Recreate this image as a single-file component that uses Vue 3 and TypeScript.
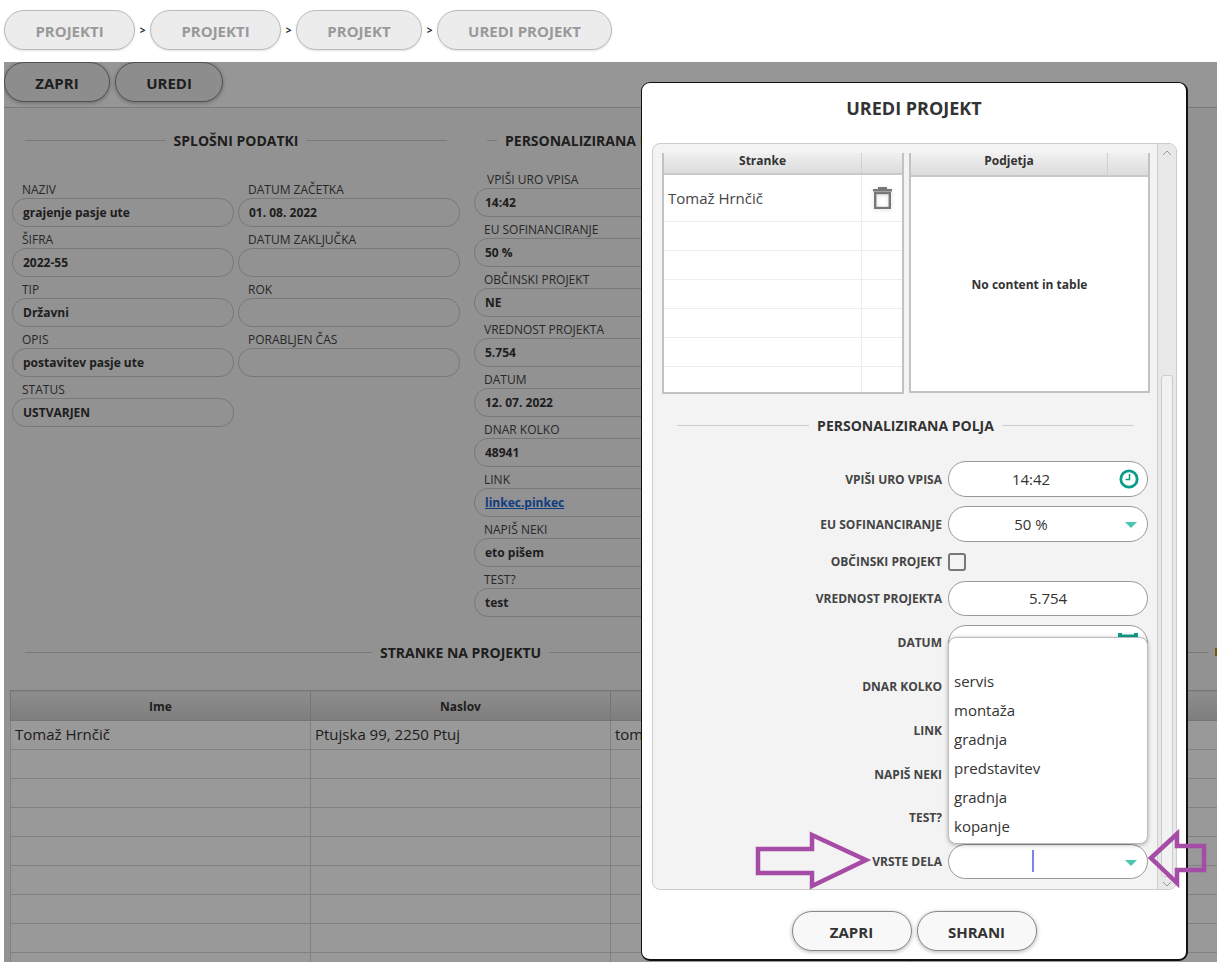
<script setup lang="ts">
interface Field {
  label: string;
  value: string;
  link?: boolean;
}

interface FormRow {
  label: string;
  value?: string;
  kind: "time" | "select" | "check" | "text" | "date" | "blank" | "caret";
  size?: string;
}

const crumbs = ["PROJEKTI", "PROJEKTI", "PROJEKT", "UREDI PROJEKT"];

const firstColumn: Field[] = [
  { label: "NAZIV", value: "grajenje pasje ute" },
  { label: "ŠIFRA", value: "2022-55" },
  { label: "TIP", value: "Državni" },
  { label: "OPIS", value: "postavitev pasje ute" },
  { label: "STATUS", value: "USTVARJEN" },
];

const secondColumn: Field[] = [
  { label: "DATUM ZAČETKA", value: "01. 08. 2022" },
  { label: "DATUM ZAKLJUČKA", value: "" },
  { label: "ROK", value: "" },
  { label: "PORABLJEN ČAS", value: "" },
];

const customColumn: Field[] = [
  { label: "VPIŠI URO VPISA", value: "14:42" },
  { label: "EU SOFINANCIRANJE", value: "50 %" },
  { label: "OBČINSKI PROJEKT", value: "NE" },
  { label: "VREDNOST PROJEKTA", value: "5.754" },
  { label: "DATUM", value: "12. 07. 2022" },
  { label: "DNAR KOLKO", value: "48941" },
  { label: "LINK", value: "linkec.pinkec", link: true },
  { label: "NAPIŠ NEKI", value: "eto pišem" },
  { label: "TEST?", value: "test" },
];

const formRows: FormRow[] = [
  { label: "VPIŠI URO VPISA", value: "14:42", kind: "time" },
  { label: "EU SOFINANCIRANJE", value: "50 %", kind: "select" },
  { label: "OBČINSKI PROJEKT", kind: "check", size: "check" },
  { label: "VREDNOST PROJEKTA", value: "5.754", kind: "text", size: "short" },
  { label: "DATUM", kind: "date" },
  { label: "DNAR KOLKO", kind: "blank", size: "short" },
  { label: "LINK", kind: "blank", size: "short" },
  { label: "NAPIŠ NEKI", kind: "blank", size: "short" },
  { label: "TEST?", kind: "blank", size: "short" },
  { label: "VRSTE DELA", kind: "caret", size: "short" },
];

const workTypes = ["", "servis", "montaža", "gradnja", "predstavitev", "gradnja", "kopanje"];
</script>

<template>
  <div class="app">
    <nav class="crumbs">
      <template v-for="(crumb, i) in crumbs" :key="i">
        <span v-if="i > 0" class="crumb-sep">&gt;</span>
        <span class="crumb" :class="`crumb-${i}`">{{ crumb }}</span>
      </template>
    </nav>

    <main class="page">
      <div class="toolbar">
        <button class="pill tool-zapri">ZAPRI</button>
        <button class="pill tool-uredi">UREDI</button>
      </div>

      <div class="sections">
        <section class="general">
          <h3 class="heading"><span>SPLOŠNI PODATKI</span></h3>
          <div class="general-grid">
            <div>
              <div v-for="f in firstColumn" :key="f.label" class="field">
                <label>{{ f.label }}</label>
                <div class="value">{{ f.value }}</div>
              </div>
            </div>
            <div>
              <div v-for="f in secondColumn" :key="f.label" class="field">
                <label>{{ f.label }}</label>
                <div class="value">{{ f.value }}</div>
              </div>
            </div>
          </div>
        </section>

        <section class="custom">
          <h3 class="heading heading-custom"><span>PERSONALIZIRANA POLJA</span></h3>
          <div v-for="(f, i) in customColumn" :key="f.label" class="field">
            <label :class="{ nudged: i === 0 }">{{ f.label }}</label>
            <div class="value">
              <a v-if="f.link" class="link">{{ f.value }}</a>
              <template v-else>{{ f.value }}</template>
            </div>
          </div>
        </section>
      </div>

      <div class="clients">
        <h3 class="heading heading-clients">
          <span>STRANKE NA PROJEKTU</span>
          <b class="next-title"></b>
        </h3>
        <table class="bg-table">
          <thead>
            <tr>
              <th>Ime</th>
              <th>Naslov</th>
              <th>Email</th>
              <th class="rest"></th>
            </tr>
          </thead>
          <tbody>
            <tr>
              <td>Tomaž Hrnčič</td>
              <td>Ptujska 99, 2250 Ptuj</td>
              <td>tomaz@example.si</td>
              <td></td>
            </tr>
            <tr v-for="n in 8" :key="n">
              <td></td>
              <td></td>
              <td></td>
              <td></td>
            </tr>
          </tbody>
        </table>
      </div>

      <div class="backdrop">
        <div class="modal">
          <h2 class="modal-title">UREDI PROJEKT</h2>

          <div class="scroll-box">
            <div class="scroll-content">
              <div class="tables">
                <table class="mini-table">
                  <thead>
                    <tr>
                      <th>Stranke</th>
                      <th class="action-col"></th>
                    </tr>
                  </thead>
                  <tbody>
                    <tr class="first-row">
                      <td>Tomaž Hrnčič</td>
                      <td class="action-col">
                        <svg class="trash" viewBox="0 0 19 22" width="19" height="22">
                          <path d="M5 0h9v2h5v2.5H0V2h5z" fill="#777" />
                          <rect x="2.2" y="6" width="14.6" height="15" fill="none" stroke="#777" stroke-width="2.4" />
                        </svg>
                      </td>
                    </tr>
                    <tr v-for="n in 6" :key="n">
                      <td></td>
                      <td class="action-col"></td>
                    </tr>
                  </tbody>
                </table>

                <div class="mini-table-empty">
                  <div class="mini-head">
                    <span>Podjetja</span>
                    <span class="mini-head-action"></span>
                  </div>
                  <div class="no-content">No content in table</div>
                </div>
              </div>

              <h3 class="heading heading-form"><span>PERSONALIZIRANA POLJA</span></h3>

              <div class="form">
                <div
                  v-for="row in formRows"
                  :key="row.label"
                  class="form-row"
                  :class="row.size"
                >
                  <label>{{ row.label }}</label>

                  <span v-if="row.kind === 'check'" class="checkbox"></span>
                  <div v-else class="input" :class="row.kind">
                    <span v-if="row.value">{{ row.value }}</span>
                    <span v-if="row.kind === 'caret'" class="text-caret"></span>

                    <svg v-if="row.kind === 'time'" class="input-icon" viewBox="0 0 20 20" width="20" height="20">
                      <circle cx="10" cy="10" r="8.2" fill="none" stroke="#0c9c8a" stroke-width="2.8" />
                      <path d="M10.5 5v5.5H6.5" fill="none" stroke="#0c9c8a" stroke-width="1.5" />
                    </svg>
                    <svg v-if="row.kind === 'date'" class="input-icon date-icon" viewBox="0 0 20 20" width="20" height="20">
                      <path d="M0 0h4v1.5h12V0h4v20H0z" fill="#0c9c8a" />
                    </svg>
                    <i v-if="row.kind === 'select' || row.kind === 'caret'" class="arrow"></i>
                  </div>
                </div>

                <ul class="dropdown">
                  <li v-for="(item, i) in workTypes" :key="i">{{ item }}</li>
                </ul>
              </div>
            </div>

            <div class="scrollbar">
              <svg viewBox="0 0 10 6" width="10" height="6" class="chevron">
                <path d="M1 5l4-4 4 4" fill="none" stroke="#999" stroke-width="1" />
              </svg>
              <div class="thumb"></div>
              <svg viewBox="0 0 10 6" width="10" height="6" class="chevron">
                <path d="M1 1l4 4 4-4" fill="none" stroke="#999" stroke-width="1" />
              </svg>
            </div>
          </div>

          <div class="modal-footer">
            <button class="pill footer-btn">ZAPRI</button>
            <button class="pill footer-btn">SHRANI</button>
          </div>
        </div>
      </div>
    </main>

    <!-- annotation arrows drawn on top of the screenshot -->
    <svg class="annotations" width="1217" height="962" viewBox="0 0 1217 962">
      <path d="M758 849H812V835L866 860L812 886V873H758Z" />
      <path d="M1151 858L1177 834V846H1204V870H1177V883Z" />
    </svg>
  </div>
</template>

<style scoped>
.app {
  position: relative;
  width: 1217px;
  height: 962px;
  overflow: hidden;
  background: #fff;
  font-family: "Open Sans", "Liberation Sans", sans-serif;
  color: #333;
}

.crumbs {
  display: flex;
  align-items: center;
  height: 62px;
  padding: 0 0 2px 4px;
  box-sizing: border-box;
}

.crumb {
  display: flex;
  align-items: center;
  justify-content: center;
  height: 40px;
  padding-top: 2px;
  box-sizing: border-box;
  border: 1px solid #bbb;
  border-radius: 20px;
  background: #ececec;
  color: #999;
  font-size: 15px;
  font-weight: 700;
  box-shadow: 0 1px 2px rgba(0, 0, 0, 0.12);
}

.crumb-0,
.crumb-1 {
  width: 131px;
}

.crumb-2 {
  width: 126px;
}

.crumb-3 {
  width: 175px;
}

.crumb-sep {
  width: 15px;
  text-align: center;
  font-size: 10px;
  font-weight: 700;
  color: #222;
}

.page {
  position: relative;
  height: 900px;
  margin-left: 4px;
  background: #f3f3f3;
  overflow: hidden;
}

.toolbar {
  display: flex;
  gap: 5px;
  height: 46px;
  box-sizing: border-box;
  background: #fbfbfb;
  border-bottom: 1px solid #ccc;
}

.pill {
  height: 40px;
  padding: 2px 0 0;
  box-sizing: border-box;
  border: 1px solid #888;
  border-radius: 20px;
  background: #ececec;
  color: #333;
  font-family: inherit;
  font-size: 15px;
  font-weight: 700;
  box-shadow: 0 1px 4px rgba(0, 0, 0, 0.3);
}

.tool-zapri {
  width: 106px;
}

.tool-uredi {
  width: 108px;
}

.sections {
  display: flex;
  gap: 14px;
  padding: 22px 0 0 8px;
}

.general {
  width: 448px;
}

.custom {
  width: 221px;
}

.heading {
  display: flex;
  align-items: center;
  gap: 8px;
  height: 20px;
  margin: 0;
  font-size: 14px;
  font-weight: 700;
  color: #333;
  white-space: nowrap;
}

.heading::before,
.heading::after {
  content: "";
  flex: 1;
  height: 1px;
  background: #ccc;
}

.general .heading {
  margin: 0 13px;
}

.general-grid {
  display: grid;
  grid-template-columns: 222px 222px;
  gap: 4px;
  margin-top: 27px;
}

.heading-custom {
  margin: 0 0 17px 13px;
}

.heading-custom::before {
  flex: 0 0 10px;
}

.field {
  height: 50px;
}

.field label {
  display: block;
  height: 21px;
  padding-left: 10px;
  font-size: 12px;
  line-height: 26px;
  color: #444;
}

.field label.nudged {
  padding-left: 13px;
}

.value {
  height: 29px;
  box-sizing: border-box;
  padding-left: 10px;
  border: 1px solid #c8c8c8;
  border-radius: 14px;
  font-size: 12px;
  font-weight: 700;
  line-height: 28px;
}

.link {
  color: #1a66d6;
  text-decoration: underline;
}

.clients {
  padding: 0 0 0 6px;
  margin-top: 25px;
}

.heading-clients {
  margin: 0 0 28px 15px;
  width: 1184px;
}

.heading-clients::before {
  flex: 0 0 347px;
}

.next-title {
  position: absolute;
  right: -2px;
  width: 4px;
  height: 8px;
  background: #cf8a1a;
}

.bg-table {
  width: 1300px;
  table-layout: fixed;
  border-collapse: collapse;
  background: #fff;
}

.bg-table th {
  width: 300px;
  height: 30px;
  padding: 2px 0 0;
  box-sizing: border-box;
  border: 1px solid #c4c4c4;
  background: linear-gradient(#ececec, #d2d2d2);
  font-size: 12px;
  font-weight: 700;
  color: #333;
}

.bg-table th.rest {
  width: 400px;
}

.bg-table td {
  height: 29px;
  padding: 0 4px 2px;
  box-sizing: border-box;
  border: 1px solid #d8d8d8;
  font-size: 15px;
  white-space: nowrap;
  overflow: hidden;
}

.backdrop {
  position: absolute;
  inset: 0;
  background: rgba(0, 0, 0, 0.4);
}

.modal {
  position: absolute;
  left: 637px;
  top: 20px;
  display: flex;
  flex-direction: column;
  width: 547px;
  height: 879px;
  box-sizing: border-box;
  border: 1px solid #111;
  border-right-width: 2px;
  border-bottom-width: 2px;
  border-radius: 9px;
  background: #fff;
}

.modal-title {
  height: 60px;
  margin: 0;
  font-size: 18px;
  font-weight: 700;
  line-height: 50px;
  text-align: center;
  color: #333;
}

.scroll-box {
  display: flex;
  flex: 1;
  min-height: 0;
  margin: 0 9px 0 10px;
  border: 1px solid #ccc;
  border-radius: 8px;
  background: #f3f3f3;
  overflow: hidden;
}

.scroll-content {
  position: relative;
  flex: 1;
  min-width: 0;
  padding: 9px 0 0 0;
}

.tables {
  display: flex;
  gap: 5px;
  margin-left: 9px;
  height: 240px;
}

.mini-table {
  width: 242px;
  height: 240px;
  table-layout: fixed;
  border-collapse: separate;
  border-spacing: 0;
  border: 2px solid #c2c2c2;
  border-top: 0;
  background: #fff;
}

.mini-table th {
  height: 22px;
  padding: 0;
  box-sizing: border-box;
  vertical-align: top;
  line-height: 15px;
  border-bottom: 2px solid #c8c8c8;
  background: linear-gradient(#f0f0f0, #dcdcdc);
  font-size: 12px;
  font-weight: 700;
  color: #333;
}

.mini-table th.action-col {
  border-left: 1px solid #d0d0d0;
}

.action-col {
  width: 41px;
}

.mini-table td {
  height: 29px;
  padding: 0 0 0 4px;
  box-sizing: border-box;
  border-bottom: 1px solid #ececec;
  font-size: 15px;
  color: #444;
}

.mini-table tr:last-child td {
  height: 25px;
  border-bottom: 0;
}

.mini-table td.action-col {
  padding: 0;
  border-left: 1px solid #ececec;
  text-align: center;
}

.mini-table .first-row td {
  height: 47px;
}

.trash {
  display: block;
  margin: 0 auto;
  filter: drop-shadow(0 1px 2px rgba(0, 0, 0, 0.15));
}

.mini-table-empty {
  display: flex;
  flex-direction: column;
  width: 241px;
  height: 240px;
  box-sizing: border-box;
  border: 2px solid #c2c2c2;
  border-top: 0;
  background: #fff;
}

.mini-head {
  display: flex;
  height: 24px;
  box-sizing: border-box;
  border-bottom: 2px solid #c8c8c8;
  background: linear-gradient(#f0f0f0, #dcdcdc);
  font-size: 12px;
  font-weight: 700;
}

.mini-head span:first-child {
  flex: 1;
  text-align: center;
  line-height: 15px;
}

.mini-head-action {
  width: 40px;
  border-left: 1px solid #d0d0d0;
}

.no-content {
  flex: 1;
  display: flex;
  align-items: center;
  justify-content: center;
  font-size: 12px;
  font-weight: 700;
  color: #333;
}

.heading-form {
  margin: 22px 23px 26px 24px;
}

.form {
  position: relative;
  display: flex;
  flex-direction: column;
  gap: 9px;
  padding-right: 9px;
}

.form-row {
  display: flex;
  align-items: center;
  justify-content: flex-end;
  gap: 6px;
  height: 36px;
}

.form-row.check {
  height: 21px;
}

.form-row.short {
  height: 34.6px;
}

.form-row label {
  font-size: 12px;
  font-weight: 700;
  color: #444;
  white-space: nowrap;
}

.input {
  position: relative;
  display: flex;
  flex: 0 0 200px;
  align-items: center;
  justify-content: center;
  height: 36px;
  box-sizing: border-box;
  border: 1px solid #999;
  border-radius: 18px;
  background: #fff;
  font-size: 15px;
  color: #333;
}

.form-row.short .input {
  height: 35px;
}

.input.time,
.input.select {
  padding-right: 34px;
}

.input.caret {
  padding-right: 30px;
}

.checkbox {
  display: block;
  flex: 0 0 18px;
  height: 18px;
  margin-right: 182px;
  box-sizing: border-box;
  border: 2px solid #777;
  border-radius: 3px;
}

.input-icon {
  position: absolute;
  right: 8px;
  top: 7px;
}

.date-icon {
  top: 7px;
  right: 9px;
}

.arrow {
  position: absolute;
  right: 10px;
  top: 15px;
  width: 0;
  height: 0;
  border-left: 6px solid transparent;
  border-right: 6px solid transparent;
  border-top: 6px solid #4cc4b4;
}

.text-caret {
  display: block;
  width: 2px;
  height: 22px;
  margin-left: 0;
  background: #8080ee;
}

.dropdown {
  position: absolute;
  right: 9px;
  bottom: 35px;
  width: 200px;
  height: 207px;
  margin: 0;
  padding: 0;
  box-sizing: border-box;
  list-style: none;
  border: 1px solid #bbb;
  border-radius: 8px;
  background: #fff;
  box-shadow: 0 1px 4px rgba(0, 0, 0, 0.3);
}

.dropdown li {
  height: 29px;
  padding-left: 5px;
  font-size: 15px;
  line-height: 29px;
  color: #333;
}

.scrollbar {
  display: flex;
  flex-direction: column;
  align-items: center;
  flex: 0 0 19px;
  box-sizing: border-box;
  padding: 6px 0 2px;
  border-left: 1px solid #ccc;
  background: #e8e8e8;
}

.chevron {
  flex: none;
}

.thumb {
  flex: 1;
  width: 12px;
  margin: 219px 0 4px;
  box-sizing: border-box;
  border: 1px solid #ccc;
  border-radius: 3px;
  background: #f2f2f2;
}

.modal-footer {
  display: flex;
  justify-content: center;
  gap: 5px;
  height: 69px;
  box-sizing: border-box;
  padding-top: 21px;
}

.footer-btn {
  width: 120px;
  background: #f8f8f8;
}

.annotations {
  position: absolute;
  left: 0;
  top: 0;
  pointer-events: none;
}

.annotations path {
  fill: none;
  stroke: #a64ca6;
  stroke-width: 4.5;
}
</style>

<style>
html,
body {
  margin: 0;
  overflow: hidden;
}
</style>
